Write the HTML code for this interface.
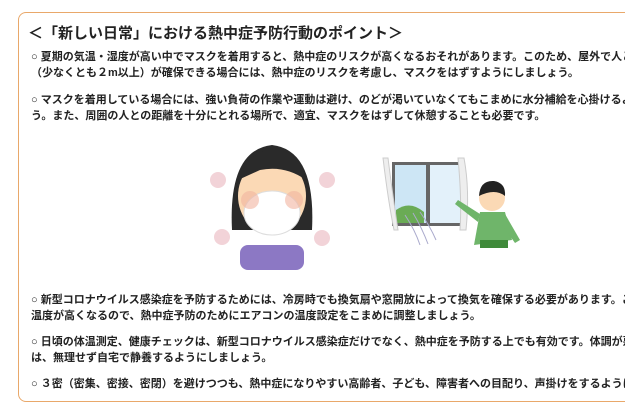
<!DOCTYPE html>
<html><head><meta charset="utf-8"><style>
body{margin:0;width:625px;height:415px;overflow:hidden;background:#fff;font-family:"Liberation Sans","Noto Sans CJK JP",sans-serif;color:#222}
.box{position:absolute;left:18px;top:12px;width:640px;height:390px;border:1.5px solid #e9a86a;border-radius:8px;box-sizing:border-box}
.t{position:absolute;left:31px;white-space:nowrap;font-size:11px;font-weight:bold;line-height:16px}
h1{position:absolute;left:28px;top:22px;margin:0;font-size:15px;font-weight:bold;white-space:nowrap}
</style></head><body>
<div class="box"></div>
<h1>＜「新しい日常」における熱中症予防行動のポイント＞</h1>
<div class="t" style="top:49px">○ 夏期の気温・湿度が高い中でマスクを着用すると、熱中症のリスクが高くなるおそれがあります。このため、屋外で人と<br>（少なくとも２m以上）が確保できる場合には、熱中症のリスクを考慮し、マスクをはずすようにしましょう。</div>
<div class="t" style="top:92px">○ マスクを着用している場合には、強い負荷の作業や運動は避け、のどが渇いていなくてもこまめに水分補給を心掛けるよ<br>う。また、周囲の人との距離を十分にとれる場所で、適宜、マスクをはずして休憩することも必要です。</div>
<svg style="position:absolute;left:0;top:0" width="625" height="415">
<g fill="#f2d3d8"><circle cx="218" cy="180" r="8"/><circle cx="327" cy="180" r="8"/><circle cx="222" cy="237" r="8"/><circle cx="322" cy="238" r="8"/></g>
<path d="M232 230 Q228 150 272 145 Q316 150 312 230 Z" fill="#2a2a2a"/>
<ellipse cx="272" cy="196" rx="34" ry="38" fill="#fbd9b5"/>
<path d="M238 180 Q250 150 272 150 Q300 150 306 180 Q285 165 260 170 Z" fill="#2a2a2a"/>
<rect x="240" y="245" width="64" height="25" rx="8" fill="#8c78c4"/>
<ellipse cx="272" cy="213" rx="28" ry="22" fill="#fff" stroke="#ddd"/>
<circle cx="250" cy="200" r="9" fill="#f2b4a0" opacity=".6"/><circle cx="294" cy="200" r="9" fill="#f2b4a0" opacity=".6"/>
<rect x="392" y="162" width="72" height="64" fill="#666"/>
<rect x="395" y="165" width="31" height="58" fill="#cde6f5"/><rect x="430" y="165" width="31" height="58" fill="#e3f1fa"/>
<path d="M396 210 Q410 200 424 212 L424 223 L396 223Z" fill="#6aab55"/>
<path d="M383 158 Q388 200 394 230 L398 230 Q392 190 388 158Z" fill="#eee" stroke="#ccc"/>
<path d="M458 158 Q462 200 460 230 L466 230 Q470 190 464 158Z" fill="#eee" stroke="#ccc"/>
<path d="M405 215 Q415 230 420 245 M413 213 Q422 228 428 244 M420 212 Q430 226 436 240" stroke="#aac" fill="none"/>
<circle cx="492" cy="198" r="13" fill="#fbd9b5"/>
<path d="M479 196 Q480 180 494 181 Q506 183 505 196 Q495 188 479 196Z" fill="#222"/>
<path d="M480 212 L505 212 L512 240 L474 245 Z" fill="#6fb56a"/>
<path d="M480 214 L458 200 L455 204 L478 222Z" fill="#6fb56a"/>
<path d="M505 214 L520 240 L515 243 L502 225Z" fill="#6fb56a"/>
<rect x="480" y="240" width="28" height="8" fill="#3f8a3a"/>
</svg>
<div class="t" style="top:292px">○ 新型コロナウイルス感染症を予防するためには、冷房時でも換気扇や窓開放によって換気を確保する必要があります。こ<br>温度が高くなるので、熱中症予防のためにエアコンの温度設定をこまめに調整しましょう。</div>
<div class="t" style="top:334px">○ 日頃の体温測定、健康チェックは、新型コロナウイルス感染症だけでなく、熱中症を予防する上でも有効です。体調が悪<br>は、無理せず自宅で静養するようにしましょう。</div>
<div class="t" style="top:376px">○ ３密（密集、密接、密閉）を避けつつも、熱中症になりやすい高齢者、子ども、障害者への目配り、声掛けをするように</div>
</body></html>
